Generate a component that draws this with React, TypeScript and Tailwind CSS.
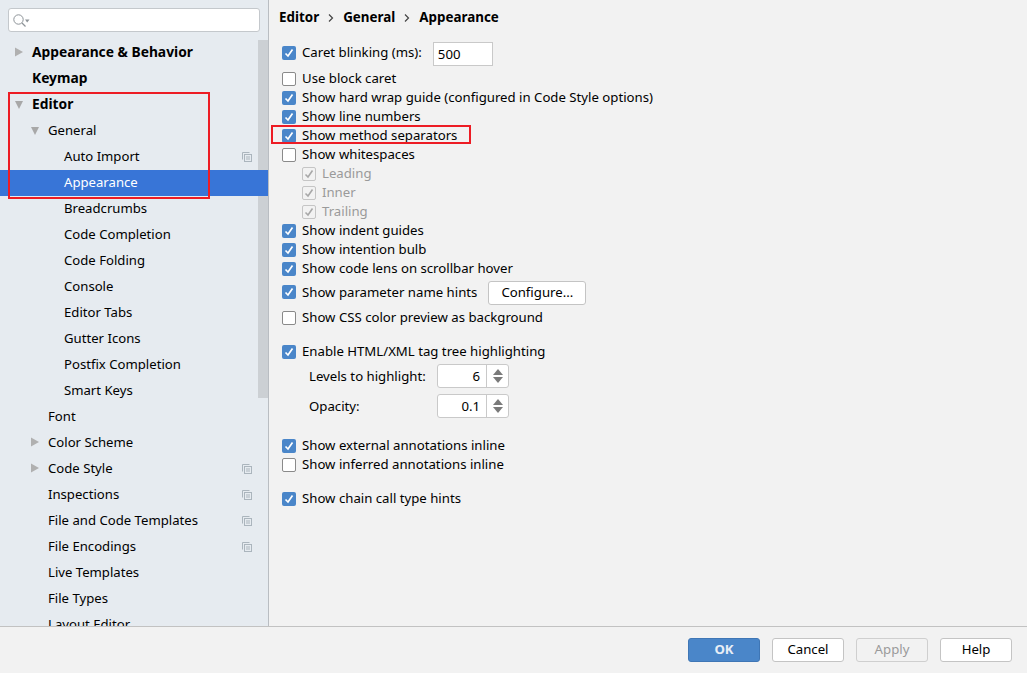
import React from "react";

const font = "font-['Noto_Sans','Liberation_Sans',sans-serif]";

type TreeRow = {
  label: string;
  indent: number;
  arrow?: "right" | "down";
  bold?: boolean;
  selected?: boolean;
  copy?: boolean;
};

const tree: TreeRow[] = [
  { label: "Appearance & Behavior", indent: 32, arrow: "right", bold: true },
  { label: "Keymap", indent: 32, bold: true },
  { label: "Editor", indent: 32, arrow: "down", bold: true },
  { label: "General", indent: 48, arrow: "down" },
  { label: "Auto Import", indent: 64, copy: true },
  { label: "Appearance", indent: 64, selected: true },
  { label: "Breadcrumbs", indent: 64 },
  { label: "Code Completion", indent: 64 },
  { label: "Code Folding", indent: 64 },
  { label: "Console", indent: 64 },
  { label: "Editor Tabs", indent: 64 },
  { label: "Gutter Icons", indent: 64 },
  { label: "Postfix Completion", indent: 64 },
  { label: "Smart Keys", indent: 64 },
  { label: "Font", indent: 48 },
  { label: "Color Scheme", indent: 48, arrow: "right" },
  { label: "Code Style", indent: 48, arrow: "right", copy: true },
  { label: "Inspections", indent: 48, copy: true },
  { label: "File and Code Templates", indent: 48, copy: true },
  { label: "File Encodings", indent: 48, copy: true },
  { label: "Live Templates", indent: 48 },
  { label: "File Types", indent: 48 },
  { label: "Layout Editor", indent: 48 },
];

function Arrow({ dir, left }: { dir: "right" | "down"; left: number }) {
  return (
    <svg
      className={`absolute ${dir === "right" ? "top-[7px]" : "top-[8px]"}`}
      style={{ left }}
      width="10"
      height="10"
      viewBox="0 0 10 10"
    >
      {dir === "right" ? (
        <path d="M1 0.5 L9 5 L1 9.5 Z" fill="#b0b0b0" />
      ) : (
        <path d="M1 1 L9 1 L5 9 Z" fill="#a8a8a8" />
      )}
    </svg>
  );
}

function CopyIcon() {
  return (
    <svg
      className="absolute left-[242px] top-[8px]"
      width="10"
      height="10"
      viewBox="0 0 10 10"
      fill="none"
      stroke="#abb5bd"
      strokeWidth="1"
    >
      <path d="M0.5 7.5 V0.5 H7.5" />
      <rect x="2.5" y="2.5" width="7" height="7" />
      <path d="M4 5 H8 M4 7 H8" />
    </svg>
  );
}

function Sidebar() {
  return (
    <aside className="flex w-[269px] shrink-0 flex-col overflow-hidden border-r border-[#b9bdc2] bg-[#e6ebf0]">
      <div className="px-2 pt-2 pb-2">
        <div className="flex h-[24px] w-[252px] items-center rounded-[3px] border border-[#c4c8cc] bg-white pl-[4px]">
          <svg width="18" height="16" viewBox="0 0 18 16" fill="none">
            <circle cx="5.5" cy="7.5" r="4.7" stroke="#8d9398" strokeWidth="1" />
            <path d="M9 11 L12.5 14.5" stroke="#8d9398" strokeWidth="1.3" />
            <path d="M12 7.5 H16.5 L14.2 10.5 Z" fill="#8d9398" />
          </svg>
        </div>
      </div>
      <div className="relative min-h-0 flex-1">
        <div className="absolute left-[258px] top-0 h-[358px] w-[10px] bg-[#ccd0d4]" />
        {tree.map((row) => (
          <div
            key={row.label}
            className={`relative flex h-[26px] items-center pb-[1px] ${
              row.selected ? "bg-[#3875d7] text-white" : "text-black"
            } ${row.bold ? "text-[13.8px] font-bold" : "text-[13.15px]"}`}
            style={{ paddingLeft: row.indent }}
          >
            {row.arrow && <Arrow dir={row.arrow} left={row.indent - 18} />}
            {row.label}
            {row.copy && <CopyIcon />}
          </div>
        ))}
        <div className="absolute left-[8px] top-[52px] h-[107px] w-[202px] border-2 border-[#ed1c24]" />
      </div>
    </aside>
  );
}

function Check({ on, muted }: { on?: boolean; muted?: boolean }) {
  if (muted) {
    return (
      <span className="flex h-[14px] w-[14px] shrink-0 items-center justify-center rounded-[2px] border border-[#c5c5c5] bg-[#f2f2f2]">
        <svg width="10" height="10" viewBox="0 0 10 10" fill="none">
          <path d="M1.5 5.5 L4 8 L8.5 1.5" stroke="#a8a8a8" strokeWidth="1.6" />
        </svg>
      </span>
    );
  }
  if (on) {
    return (
      <span className="flex h-[14px] w-[14px] shrink-0 items-center justify-center rounded-[2px] bg-[#4a86c9]">
        <svg width="10" height="10" viewBox="0 0 10 10" fill="none">
          <path d="M1.5 5.5 L4 8 L8.5 1.5" stroke="#ffffff" strokeWidth="1.7" />
        </svg>
      </span>
    );
  }
  return (
    <span className="h-[14px] w-[14px] shrink-0 rounded-[2px] border border-[#8a8a8a] bg-white" />
  );
}

function Option({
  label,
  on,
  muted,
  children,
}: {
  label: string;
  on?: boolean;
  muted?: boolean;
  children?: React.ReactNode;
}) {
  return (
    <div className="relative flex h-[19px] items-center gap-[6px]">
      <Check on={on} muted={muted} />
      <span className={muted ? "text-[#9a9a9a]" : "text-black"}>{label}</span>
      {children}
    </div>
  );
}

function Spinner({ value }: { value: string }) {
  return (
    <div className="flex h-[24px] w-[72px] rounded-[3px] border border-[#c9c9c9] bg-white">
      <div className="flex-1 pr-[6px] text-right leading-[22px] text-black">{value}</div>
      <div className="flex w-[22px] flex-col items-center justify-center gap-[2px] border-l border-[#c9c9c9]">
        <svg width="10" height="6" viewBox="0 0 10 6">
          <path d="M5 0 L10 6 H0 Z" fill="#7a7a7a" />
        </svg>
        <svg width="10" height="6" viewBox="0 0 10 6">
          <path d="M0 0 H10 L5 6 Z" fill="#7a7a7a" />
        </svg>
      </div>
    </div>
  );
}

function Crumb() {
  return (
    <svg width="6" height="8" viewBox="0 0 6 8" fill="none" className="mx-[9px]">
      <path d="M1 0.5 L4.5 4 L1 7.5" stroke="#444" strokeWidth="1.2" />
    </svg>
  );
}

function Settings() {
  return (
    <main className="min-w-0 flex-1 pl-[13px]">
      <div className="-ml-[3px] flex h-[35px] items-center text-[13.4px] font-bold text-black">
        Editor
        <Crumb />
        General
        <Crumb />
        Appearance
      </div>
      <div className="flex h-[34px] items-center gap-[6px] pt-[2px]">
        <Check on />
        <span className="text-black">Caret blinking (ms):</span>
        <div className="mt-[2px] ml-[5px] h-[24px] w-[60px] border border-[#c9c9c9] bg-white pl-[4px] leading-[22px] text-black">
          500
        </div>
      </div>
      <Option label="Use block caret" />
      <Option label="Show hard wrap guide (configured in Code Style options)" on />
      <Option label="Show line numbers" on />
      <Option label="Show method separators" on>
        <div className="absolute -left-[11px] -top-[1px] h-[19px] w-[200px] border-2 border-[#ed1c24]" />
      </Option>
      <Option label="Show whitespaces" />
      <div className="pl-[20px]">
        <Option label="Leading" muted />
        <Option label="Inner" muted />
        <Option label="Trailing" muted />
      </div>
      <Option label="Show indent guides" on />
      <Option label="Show intention bulb" on />
      <Option label="Show code lens on scrollbar hover" on />
      <div className="flex h-[30px] items-center gap-[6px]">
        <div className="mb-[2px] flex">
          <Check on />
        </div>
        <span className="text-black">Show parameter name hints</span>
        <button className="ml-[5px] h-[24px] w-[98px] rounded-[3px] border border-[#c4c4c4] bg-white text-black">
          Configure...
        </button>
      </div>
      <Option label="Show CSS color preview as background" />
      <div className="mt-[15px]">
        <Option label="Enable HTML/XML tag tree highlighting" on />
      </div>
      <div className="mt-[3px] flex h-[24px] items-center pl-[27px]">
        <span className="w-[128px] pt-[2px] text-black">Levels to highlight:</span>
        <Spinner value="6" />
      </div>
      <div className="mt-[6px] flex h-[24px] items-center pl-[27px]">
        <span className="w-[128px] pt-[2px] text-black">Opacity:</span>
        <Spinner value="0.1" />
      </div>
      <div className="mt-[18px]">
        <Option label="Show external annotations inline" on />
        <Option label="Show inferred annotations inline" />
      </div>
      <div className="mt-[15px]">
        <Option label="Show chain call type hints" on />
      </div>
    </main>
  );
}

function FooterButton({
  label,
  kind,
}: {
  label: string;
  kind?: "primary" | "disabled";
}) {
  const look =
    kind === "primary"
      ? "border-[#3f76b5] bg-[#4a86c9] font-bold text-[#e8eef6]"
      : kind === "disabled"
        ? "border-[#cfcfcf] bg-[#f2f2f2] text-[#9a9a9a]"
        : "border-[#c4c4c4] bg-white text-black";
  return (
    <button className={`h-[24px] w-[72px] rounded-[3px] border ${look}`}>{label}</button>
  );
}

export default function App() {
  return (
    <div className={`flex h-[673px] w-[1027px] flex-col overflow-hidden bg-[#f2f2f2] text-[13.2px] ${font}`}>
      <div className="flex min-h-0 flex-1">
        <Sidebar />
        <Settings />
      </div>
      <footer className="flex h-[47px] shrink-0 items-start justify-end gap-[12px] border-t border-[#c2c2c2] pt-[11px] pr-[15px]">
        <FooterButton label="OK" kind="primary" />
        <FooterButton label="Cancel" />
        <FooterButton label="Apply" kind="disabled" />
        <FooterButton label="Help" />
      </footer>
    </div>
  );
}
